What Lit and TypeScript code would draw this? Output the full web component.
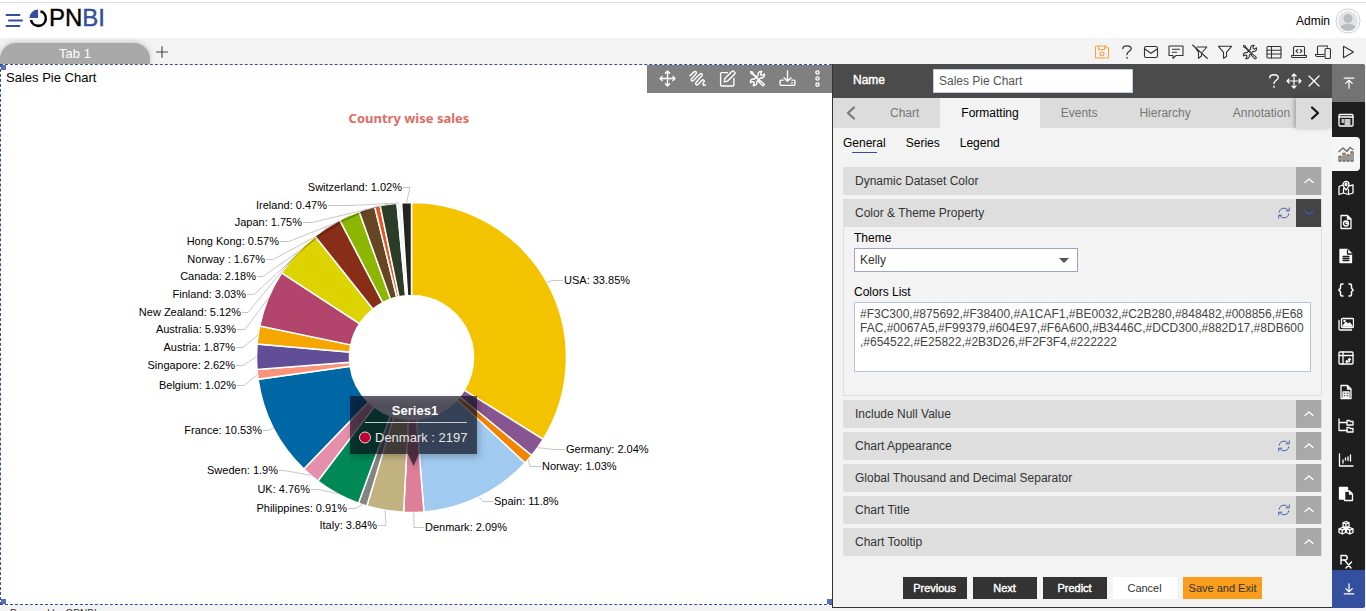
import { LitElement, html, svg, css } from "lit";
import { customElement, state } from "lit/decorators.js";
import { classMap } from "lit/directives/class-map.js";

const icon = (body: unknown, size = 16, weight = 1.1) => html`<svg
  width=${size} height=${size} viewBox="0 0 16 16" fill="none" stroke="currentColor"
  stroke-width=${weight} stroke-linecap="round" stroke-linejoin="round" aria-hidden="true">${body}</svg>`;

const ICONS: Record<string, unknown> = {
  save: svg`<path d="M1.500 3a1 1 0 0 1 1-1h9l3 2.500v8.500a1 1 0 0 1-1 1h-11a1 1 0 0 1-1-1zM4.500 2v3.500h6V2"/><circle cx="8" cy="9.800" r="2"/>`,
  help: svg`<path d="M3.800 4.700C3.800 2.600 5.500 1.800 8 1.800s4.200 1 4.200 3C12.200 7.400 8 7.200 8 10.500M8 13.300v.9"/>`,
  mail: svg`<rect x="1.500" y="2.500" width="13" height="11" rx="1.500"/><path d="M1.800 5 8 9.300 14.200 5"/>`,
  comment: svg`<path d="M1 2h14v9.500H8l-3 2.800v-2.800H1zM4.500 5.300h7M4.500 8.300h4"/>`,
  nofilter: svg`<path d="M5 3h9.800L10.500 8M2.800 3 6.500 8.300v6L9.500 12v-2M.6 1 15.400 14.500"/>`,
  filter: svg`<path d="M1.500 2.300h13L9.500 8.300v4.200l-3 1.800V8.300z"/>`,
  tools: svg`<path d="M1.500 1.500 3.300 2l1 2 4 4M10 9.600l3.900 3.300c1 1.100-.3 2.500-1.500 1.500L9 10.800z"/><path d="M1.500 1.500 2 3.300l2 1 4 4M14.500 3.800 12.600 5l-1.400-.3L10.900 3.300 12.100 1.400C9.900.9 8 2.600 8.600 5L5 8.600c-2.300-.7-4.200 1.300-3.500 3.400l1.900-1 1.300.4.300 1.400-1.200 1.800c2.200.6 4.200-1.200 3.500-3.500L11 7.400c2.300.6 4.100-1.400 3.500-3.600z"/>`,
  table: svg`<rect x="1" y="2.500" width="14" height="11.500" rx="1"/><path d="M1 6.200h14M1 10h14M5.500 2.500V14"/>`,
  laptop: svg`<path d="M2.500 11V3.500a1 1 0 0 1 1-1h9a1 1 0 0 1 1 1V11M.5 11.500h15v1a1 1 0 0 1-1 1h-13a1 1 0 0 1-1-1zM6.700 5.500 5 7.100l1.700 1.600M9.300 5.500 11 7.100 9.300 8.700"/>`,
  devices: svg`<path d="M2.500 10V3a1 1 0 0 1 1-1h9v1M9 10.500H.5v.5c0 1 .7 1.500 1.500 1.500h7"/><rect x="10" y="4.500" width="5.500" height="10" rx="1.300"/>`,
  play: svg`<path d="M3.500 2.300 13.500 8l-10 5.700z"/>`,
  move: svg`<path d="M8 1v14M1 8h14M6 3l2-2 2 2M6 13l2 2 2-2M3 6 1 8l2 2M13 6l2 2-2 2"/>`,
  scribble: svg`<path d="M.8 5.500 4.500 2c1.700-1.500 3.300.2 2 1.700L2.600 8c-1.400 1.700.2 3.200 1.800 1.700L10 4c1.600-1.500 3.300 0 1.900 1.700l-5.100 5.800c-1.400 1.800.3 3.400 1.900 1.900L12 9.800c1.500-1.400 3-.2 2 1.400l-.6 1.300c-.6 1.600.6 2.400 2 1.500"/>`,
  edit: svg`<path d="M8 2.500H2.500a1 1 0 0 0-1 1V14a1 1 0 0 0 1 1H13a1 1 0 0 0 1-1V8M5.500 8 12.300 1.200a1 1 0 0 1 1.500 0l1 1a1 1 0 0 1 0 1.500L8 10.500l-3 .7z"/>`,
  download: svg`<path d="M8 1v9.500M4.700 7.300 8 10.600l3.300-3.300M4 9.500H2a1 1 0 0 0-1 1v3a1 1 0 0 0 1 1h12a1 1 0 0 0 1-1v-3a1 1 0 0 0-1-1h-2M12 12.200h.5"/>`,
  dots: svg`<circle cx="8" cy="2.300" r="1.500"/><circle cx="8" cy="8" r="1.500"/><circle cx="8" cy="13.700" r="1.500"/>`,
  close: svg`<path d="m3 3 10 10M13 3 3 13"/>`,
  refresh: svg`<path d="M2.500 7C3 4.200 5.300 2.500 8 2.500c2 0 3.600.9 4.700 2.500M13.500 9c-.5 2.800-2.800 4.500-5.500 4.500-2 0-3.600-.9-4.700-2.500M14 2.200V5.500h-3.400M2 13.800V10.500h3.400"/>`,
  top: svg`<path d="M2.500 2.500h11M8 14V5M4.300 8.500 8 4.800l3.700 3.700"/>`,
  bottom: svg`<path d="M2.500 13.500h11M8 2v9M4.300 7.500 8 11.200l3.700-3.700"/>`,
};

const SIDE: [string, unknown][] = [
  ["Properties", svg`<rect x="1" y="2.500" width="14" height="11.500" rx="1"/><path d="M1 5h14M4 8h1.500M7 8h5M4 10h1.500M7 10h5M7 12h5"/>`],
  ["Charts", svg`<path d="M1 5.500 5 2l4 3.500 3-4 3 2"/><path d="M1 10.500h2V15H1zM5 7.500h2V15H5zM9 9h2v6H9zM13 6h2v9h-2z"/><path d="M5 9.500h2M13 8h2" stroke="#e08a3c"/>`],
  ["Maps", svg`<path d="M4.700 5 1 6.500v8l4.500-1.500 5 1.500L15 13V5l-3.500.8M5.500 8.500V13M10.500 9.500v5M8 10C6 7.500 5 6.300 5 4.500a3 3 0 0 1 6 0C11 6.300 10 7.500 8 10z"/><circle cx="8" cy="4.500" r="1"/>`],
  ["Reports", svg`<path d="M3 1.500h6.500L13 5v9.500H3zM9.500 1.500V5H13"/><circle cx="8" cy="9.500" r="2.500"/><path d="M8 7v2.500h2.500"/>`],
  ["Text", svg`<path d="M2 1.500h7.500l4 4v9H2z" fill="currentColor"/><path d="M9.500 2v4h4M5 8.500h6M5 10.500h6M5 12.500h6" stroke="#1e1e1e"/>`],
  ["Code", svg`<path stroke-width="1.500" d="M5 2H4C3 2 2.500 2.700 2.500 3.500v2.700L.8 8l1.700 1.800v2.700c0 .8.500 1.500 1.500 1.500h1M11 2h1c1 0 1.500.7 1.500 1.500v2.700L15.200 8l-1.700 1.800v2.700c0 .8-.5 1.500-1.500 1.500h-1"/>`],
  ["Images", svg`<rect x="3.500" y="2.500" width="12" height="9" rx="1"/><path d="M1 4.500V13a1 1 0 0 0 1 1h11.500"/><path d="m5 10 3-3.500 2 2 1.500-1.500L14 10z" fill="currentColor"/><circle cx="6.500" cy="5" r=".6"/>`],
  ["Pivot", svg`<rect x="1" y="2" width="14" height="12" rx="1"/><path d="M1 5.500h14M5 2v12M8 11.500h3.500V8.500M9 10.500l-1 1 1 1M10.500 9.500l1-1 1 1"/>`],
  ["Data file", svg`<path d="M3 1.500h6.500L13 5v9.500H3zM9.500 1.500V5H13M5 8h6v5H5zM5 10.500h6M8 8v5"/>`],
  ["Tree", svg`<path d="M1 1v11.500h8M1 4.500h8"/><path d="M9 2.500h2.500l.7 1H15v3.500H9zM9 9.500h2.500l.7 1H15V14H9z"/>`],
  ["Scatter", svg`<path d="M1.500 2v12H15M5 8v3M7.500 6v2M10 5v3.500M12.500 3v6"/>`],
  ["Copy", svg`<path d="M1.500 1.500h8v3.500H6.500v8h-5z" fill="currentColor"/><path d="M6.500 5h5l3 3v6.500h-8zM11.500 5v3h3"/>`],
  ["Objects", svg`<path d="m8 1.500 3 1.300v3.500L8 7.700 5 6.300V2.800zM5 2.800 8 4l3-1.200M8 4v3.700M4.300 7.500l3.200 1.300v3.700L4.300 14 1 12.500V8.800zM1 8.800l3.300 1.300 3.200-1.300M4.300 10v4M11.700 7.500 15 8.800v3.700L11.700 14l-3.200-1.500V8.800zM8.500 8.800l3.200 1.300L15 8.800M11.700 10v4"/>`],
  ["Prescriptions", svg`<path stroke-width="1.400" d="M3 10V1.500h4c3 0 3 4.500 0 4.500H3M6.500 6 13 14M13.500 8 8 14"/>`],
];

interface Slice { name: string; pct: number; color: string; x: number; y: number; elbow: number; right?: boolean; }

const SLICES: Slice[] = [
  { name: "USA", pct: 33.85, color: "#F3C300", x: 564, y: 280, elbow: 552, right: true },
  { name: "Germany", pct: 2.04, color: "#875692", x: 566, y: 449, elbow: 555, right: true },
  { name: "Norway", pct: 1.03, color: "#F38400", x: 542, y: 466, elbow: 530, right: true },
  { name: "Spain", pct: 11.8, color: "#A1CAF1", x: 494, y: 501, elbow: 483, right: true },
  { name: "Denmark", pct: 2.09, color: "#DE7F98", x: 425, y: 527, elbow: 414, right: true },
  { name: "Italy", pct: 3.84, color: "#C2B280", x: 377, y: 525, elbow: 386 },
  { name: "Philippines", pct: 0.91, color: "#848482", x: 347, y: 508, elbow: 355 },
  { name: "UK", pct: 4.76, color: "#008856", x: 310, y: 489, elbow: 319 },
  { name: "Sweden", pct: 1.9, color: "#E68FAC", x: 278, y: 470, elbow: 284 },
  { name: "France", pct: 10.53, color: "#0067A5", x: 262, y: 430, elbow: 268 },
  { name: "Belgium", pct: 1.02, color: "#F99379", x: 236, y: 385, elbow: 244 },
  { name: "Singapore", pct: 2.62, color: "#604E97", x: 235, y: 365, elbow: 243 },
  { name: "Austria", pct: 1.87, color: "#F6A600", x: 235, y: 347, elbow: 243 },
  { name: "Australia", pct: 5.93, color: "#B3446C", x: 236, y: 329, elbow: 245 },
  { name: "New Zealand", pct: 5.12, color: "#DCD300", x: 241, y: 312, elbow: 248 },
  { name: "Finland", pct: 3.03, color: "#882D17", x: 246, y: 294, elbow: 254 },
  { name: "Canada", pct: 2.18, color: "#8DB600", x: 256, y: 276, elbow: 263 },
  { name: "Norway ", pct: 1.67, color: "#654522", x: 265, y: 259, elbow: 273 },
  { name: "Hong Kong", pct: 0.57, color: "#E25822", x: 279, y: 241, elbow: 289 },
  { name: "Japan", pct: 1.75, color: "#2B3D26", x: 302, y: 222, elbow: 312 },
  { name: "Ireland", pct: 0.47, color: "#F2F3F4", x: 327, y: 205, elbow: 350 },
  { name: "Switzerland", pct: 1.02, color: "#222222", x: 402, y: 187, elbow: 410 },
];

const CX = 411.5, CY = 357.5, R_OUT = 155, R_IN = 62;
const at = (turn: number, r: number) => {
  const a = turn * 2 * Math.PI;
  return [CX + r * Math.sin(a), CY - r * Math.cos(a)].map((v) => v.toFixed(2)).join(" ");
};

@customElement("pie-chart")
export class PieChart extends LitElement {
  static styles = css`
    :host { display: flex; flex: 1; min-height: 0; }
    .plot { flex: 1; min-width: 0; font: 11px "Liberation Sans", Arial, sans-serif; }
    .title { font: bold 13px "Noto Sans", "Open Sans", sans-serif; fill: #dd6b66; text-anchor: middle; }
    .label { fill: #000; }
    .left { text-anchor: end; }
    .slice { stroke: #fff; stroke-width: 1.5; }
    .leader { fill: none; stroke: #000; stroke-opacity: 0.22; }
    .tip { fill: rgba(12, 12, 28, 0.64); filter: drop-shadow(2px 3px 3px rgba(0, 0, 0, 0.35)); }
    .tip-text { font-size: 13px; fill: #e6e6e6; }
    .tip-title { font-size: 13px; font-weight: bold; fill: #fff; text-anchor: middle; }
    .tip-rule { stroke: #c8c8cc; }
    .tip-dot { fill: #be0032; stroke: #ddd; }
  `;

  render() {
    let turn = 0;
    const parts = SLICES.map((s) => {
      const a = turn, b = (turn += s.pct / 100);
      return { s, a, b, mid: (a + b) / 2 };
    });
    return html`<svg class="plot" viewBox="1 93 831 511" role="img" aria-label="Country wise sales">
      <text class="title" x="409" y="123">Country wise sales</text>
      ${parts.map(({ s, a, b }) => {
        const big = b - a > 0.5 ? 1 : 0;
        return svg`<path class="slice" fill=${s.color}
          d="M${at(a, R_OUT)}A${R_OUT} ${R_OUT} 0 ${big} 1 ${at(b, R_OUT)}L${at(b, R_IN)}A${R_IN} ${R_IN} 0 ${big} 0 ${at(a, R_IN)}z"/>`;
      })}
      ${parts.map(({ s, mid }) => svg`
        <path class="leader" d="M${s.right ? s.x - 1 : s.x + 1} ${s.y + 0.5}H${s.elbow}L${at(mid, R_OUT)}"/>
        <text class=${s.right ? "label" : "label left"} x=${s.x} y=${s.y + 4}>${s.name}: ${s.pct}%</text>`)}
      <path class="tip" d="M350 396H477V454H419L413.5 466L408 454H350z"/>
      <text class="tip-title" x="415" y="415">Series1</text>
      <path class="tip-rule" d="M365 422.500H467"/>
      <circle class="tip-dot" cx="365" cy="437.500" r="5.500"/>
      <text class="tip-text" x="375" y="442">Denmark : 2197</text>
    </svg>`;
  }
}

@customElement("property-panel")
export class PropertyPanel extends LitElement {
  @state() private open = "Color & Theme Property";

  static styles = css`
    :host { display: flex; flex-direction: column; width: 500px; margin-bottom: 3px; box-sizing: border-box;
      border-left: 1px solid #333; border-bottom: 1px solid #333; background: #f3f3f3;
      font: 12px "Liberation Sans", Arial, sans-serif; color: #000; }
    button { font: inherit; color: inherit; border: 0; padding: 0; background: none; display: grid; place-items: center; }
    .head { display: flex; align-items: center; height: 34px; background: #4b4b4b; color: #fff; padding: 0 10px 0 20px; }
    .name { flex: none; width: 80px; padding-bottom: 2px; -webkit-text-stroke: 0.4px #fff; }
    .name-box { width: 200px; height: 24px; box-sizing: border-box; border: 1px solid #c5cbe0; padding: 0 5px;
      font: inherit; color: #555; background: #fff; margin: 0; }
    .tools { display: flex; gap: 4px; margin-left: auto; }
    .tabs { display: flex; height: 30px; background: #dcdcdc; color: #777; }
    .arrow { flex: none; width: 36px; }
    .arrow.next { color: #111; box-shadow: -2px 0 4px rgba(0, 0, 0, 0.25); background: #dcdcdc; position: relative; }
    .strip { display: flex; flex: 1; min-width: 0; overflow: hidden; }
    .tab { padding: 0 21px; flex: none; }
    .tab.on { background: #f3f3f3; color: #000; }
    .subs { display: flex; gap: 20px; padding: 8px 10px 0; height: 31px; box-sizing: border-box; align-items: start; }
    .sub { line-height: 14px; gap: 2px; }
    .sub.on::after { content: ""; width: 25px; height: 1px; background: #354f9f; }
    .list { display: flex; flex-direction: column; gap: 4px; padding: 8px 10px 0; flex: 1; }
    .item { border-right: 1px solid #ddd; }
    .bar { display: flex; align-items: center; height: 28px; background: #dedede; color: #333; padding-left: 12px; }
    .bar-name { flex: 1; }
    .sync { color: #3f57a6; width: 25px; }
    .toggle { width: 25px; height: 28px; background: #a9a9a9; color: #fff; }
    .toggle.open { background: #444; color: #3f5cc0; }
    .body { border: 1px solid #ddd; border-width: 0 0 1px 1px; padding: 4px 10px 23px; display: flex; flex-direction: column; align-items: stretch; }
    .caption { line-height: 14px; margin-bottom: 3px; }
    .pick { display: grid; align-items: center; width: 224px; margin-bottom: 13px; }
    .pick > * { grid-area: 1 / 1; }
    .pick svg { justify-self: end; margin-right: 9px; pointer-events: none; }
    .theme { appearance: none; height: 24px; border: 1px solid #9aa5c8; background: #fff; font: inherit; color: #333; padding: 0 5px; border-radius: 0; margin: 0; }
    .colors { height: 70px; box-sizing: border-box; border: 1px solid #bcc4dc; background: #fff; padding: 4px 5px; font: inherit;
      line-height: 14px; color: #444; resize: none; line-break: anywhere; margin: 0; overflow: hidden; }
    .foot { display: flex; justify-content: center; gap: 6px; padding-bottom: 8px; }
    .act { height: 22px; min-width: 64px; font-size: 11px; background: #333; color: #fff; -webkit-text-stroke: 0.4px #fff; }
    .act.plain { background: #fff; color: #333; -webkit-text-stroke: 0; }
    .act.main { background: #f99d1c; color: #333; -webkit-text-stroke: 0; padding: 0 6px; min-width: 79px; box-sizing: border-box; }
  `;

  private section(name: string, sync = false, body: unknown = "") {
    const open = this.open === name;
    return html`<div class="item">
      <div class="bar"><span class="bar-name">${name}</span>
        ${sync ? html`<button class="sync" aria-label="Reset ${name}">${icon(ICONS.refresh, 14)}</button>` : ""}
        <button class=${classMap({ toggle: true, open })} aria-label="Toggle ${name}" aria-expanded=${open}
          @click=${() => (this.open = open ? "" : name)}>
          ${icon(open ? svg`<path d="m4 6 4 3.500L12 6"/>` : svg`<path stroke-width="1.300" d="m4 9.500 4-3.500 4 3.500"/>`)}</button>
      </div>${open ? body : ""}</div>`;
  }

  render() {
    return html`
      <div class="head">
        <label class="name" for="name">Name</label>
        <input class="name-box" id="name" value="Sales Pie Chart">
        <div class="tools">
          <button aria-label="Help">${icon(ICONS.help, 16, 1.4)}</button>
          <button aria-label="Move">${icon(ICONS.move, 16, 1.2)}</button>
          <button aria-label="Close">${icon(ICONS.close, 16, 1.3)}</button>
        </div>
      </div>
      <div class="tabs">
        <button class="arrow" aria-label="Previous tabs">${icon(svg`<path stroke-width="2.200" d="M11 2.500 5 8l6 5.500"/>`)}</button>
        <div class="strip">${["Chart", "Formatting", "Events", "Hierarchy", "Annotation"].map((t) =>
          html`<button class=${classMap({ tab: true, on: t === "Formatting" })}>${t}</button>`)}</div>
        <button class="arrow next" aria-label="Next tabs">${icon(svg`<path stroke-width="2.200" d="m6 2.500 6 5.500-6 5.500"/>`)}</button>
      </div>
      <div class="subs">${["General", "Series", "Legend"].map((t) =>
        html`<button class=${classMap({ sub: true, on: t === "General" })}>${t}</button>`)}</div>
      <div class="list">
        ${this.section("Dynamic Dataset Color")}
        ${this.section("Color & Theme Property", true, html`<div class="body">
          <label class="caption" for="theme">Theme</label>
          <div class="pick"><select class="theme" id="theme"><option>Kelly</option></select>
            <svg width="10" height="5" viewBox="0 0 10 5" aria-hidden="true"><path d="M0 0h10L5 5z" fill="#555"/></svg></div>
          <label class="caption" for="colors">Colors List</label>
          <textarea class="colors" id="colors" spellcheck="false" .value=${"#F3C300,#875692,#F38400,#A1CAF1,#BE0032,#C2B280,#848482,#008856,#E68FAC,#0067A5,#F99379,#604E97,#F6A600,#B3446C,#DCD300,#882D17,#8DB600,#654522,#E25822,#2B3D26,#F2F3F4,#222222"}></textarea>
        </div>`)}
        ${this.section("Include Null Value")}
        ${this.section("Chart Appearance", true)}
        ${this.section("Global Thousand and Decimal Separator")}
        ${this.section("Chart Title", true)}
        ${this.section("Chart Tooltip")}
      </div>
      <div class="foot">
        <button class="act">Previous</button><button class="act">Next</button><button class="act">Predict</button>
        <button class="act plain">Cancel</button><button class="act main">Save and Exit</button>
      </div>`;
  }
}

@customElement("app-root")
export class AppRoot extends LitElement {
  static styles = css`
    :host { display: flex; flex-direction: column; height: 100vh; overflow: hidden; background: #f3f3f3;
      font: 12px "Liberation Sans", Arial, sans-serif; color: #000; }
    button { font: inherit; color: inherit; border: 0; padding: 0; background: none; display: grid; place-items: center; }
    .top { display: flex; align-items: center; height: 36px; margin-top: 2px; box-sizing: border-box; border-top: 1px solid #ddd;
      background: #fff; padding: 0 5px; box-shadow: 0 -2px #fff; flex: none; }
    .brand { display: flex; align-items: center; gap: 1px; margin-left: 6px; padding-bottom: 5px; font-size: 24px; line-height: 26px; -webkit-text-stroke: 0.4px; }
    .bi { color: #354f9f; }
    .user { margin-left: auto; display: flex; align-items: center; gap: 5px; }
    .tabbar { display: flex; height: 26px; align-items: end; padding-right: 10px; flex: none; }
    .page { width: 150px; height: 21px; border-radius: 16px 16px 0 0; background: #a9a9a9; color: #fff; font-size: 13px;
      box-shadow: 0 -1px 5px rgba(0, 0, 0, 0.2); }
    .add { width: 24px; height: 24px; color: #444; }
    .actions { display: flex; justify-content: space-between; width: 262px; margin-left: auto; height: 25px; color: #333; }
    .save { color: #f9a04a; }
    .main { display: flex; flex: 1; min-height: 0; }
    .stage { display: flex; flex-direction: column; flex: 1; min-width: 0; }
    .canvas { position: relative; flex: 1; min-height: 0; display: flex; flex-direction: column; background: #fff;
      border: 1px dashed #354fa8; border-right: 0; }
    .grip { position: absolute; width: 5px; height: 5px; background: #5b6fb5; }
    .tl { left: 0; top: 0; } .bl { left: 0; bottom: 0; } .br { right: 0; bottom: 0; }
    .row { display: flex; justify-content: space-between; height: 28px; flex: none; }
    .widget { font-size: 13px; padding: 5px 0 0 5px; line-height: 16px; }
    .toolbar { display: flex; background: #808080; color: #fff; padding-left: 5px; }
    .toolbar button { width: 30px; height: 27px; }
    .powered { height: 6px; font-size: 10px; padding-left: 10px; color: #333; }
    .powered p { margin: 0; padding-top: 2px; line-height: 14px; }
    .rail { display: flex; flex-direction: column; width: 33px; margin: 0 1px 3px 0; background: #1e1e1e; color: #fff; border-radius: 0 3px 3px 0; overflow: hidden; }
    .rail-list { flex: 1; min-height: 0; overflow: hidden; padding-top: 1px; }
    .rail-item { width: 28px; height: 34px; }
    .rail-item.on { background: #f5f5f5; color: #666; border-radius: 0 4px 4px 0; }
    .rail-end { height: 38px; flex: none; width: 100%; }
    .up { background: #737373; }
    .down { background: #354f9f; }
  `;

  private tool(label: string, key: string, size = 16, weight = 1.1) {
    return html`<button class=${key} aria-label=${label} title=${label}>${icon(ICONS[key], size, weight)}</button>`;
  }

  render() {
    return html`
      <header class="top">
        <button aria-label="Menu"><svg width="18" height="16" viewBox="0 0 18 16" fill="none" stroke="#354f9f" stroke-width="2" stroke-linecap="round" aria-hidden="true"><path d="M1.500 2h13M4 7.500h13M1.500 13h13"/></svg></button>
        <div class="brand" role="img" aria-label="OPNBI">
          <svg width="19" height="19" viewBox="0 0 19 19" aria-hidden="true">
            <path d="M11.500 2.200A7.500 7.500 0 1 1 2 11" fill="none" stroke="#000" stroke-width="2.600"/>
            <path d="M9 .5V9H.5A8.500 8.500 0 0 1 9 .5z" fill="#354f9f"/></svg>
          <span>PN<span class="bi">BI</span></span>
        </div>
        <div class="user"><span>Admin</span>
          <svg width="26" height="26" viewBox="0 0 26 26" aria-hidden="true"><circle cx="13" cy="13" r="12" fill="#fff" stroke="#ccc"/>
            <circle cx="13" cy="13" r="10" fill="#e4e4e6"/><circle cx="13" cy="10.500" r="4.500" fill="#bbbcc0"/><path d="M5.500 19.500c1-5 14-5 15 0a10 10 0 0 1-15 0z" fill="#bbbcc0"/></svg>
        </div>
      </header>
      <nav class="tabbar">
        <button class="page">Tab 1</button>
        <button class="add" aria-label="Add tab">${icon(svg`<path d="M8 2.500v11M2.500 8h11"/>`)}</button>
        <div class="actions">
          ${this.tool("Save", "save")}${this.tool("Help", "help", 16, 1.3)}${this.tool("Mail", "mail")}${this.tool("Comment", "comment")}
          ${this.tool("Clear filter", "nofilter")}${this.tool("Filter", "filter")}${this.tool("Tools", "tools")}${this.tool("Data", "table")}
          ${this.tool("Script", "laptop")}${this.tool("Devices", "devices")}${this.tool("Run", "play")}
        </div>
      </nav>
      <main class="main">
        <section class="stage">
          <div class="canvas">
            <div class="row"><span class="widget">Sales Pie Chart</span>
              <div class="toolbar">
                ${this.tool("Move", "move", 17, 1.3)}${this.tool("Style", "scribble", 17, 1.3)}${this.tool("Edit", "edit", 17, 1.3)}
                ${this.tool("Tools", "tools", 17, 1.3)}${this.tool("Download", "download", 17, 1.3)}${this.tool("More", "dots", 17, 1.3)}
              </div></div>
            <pie-chart></pie-chart>
            <i class="grip tl"></i><i class="grip bl"></i><i class="grip br"></i>
          </div>
          <footer class="powered"><p>Powered by OPNBI</p></footer>
        </section>
        <property-panel></property-panel>
        <aside class="rail">
          <button class="rail-end up" aria-label="Scroll up">${icon(ICONS.top, 14, 1.4)}</button>
          <div class="rail-list">${SIDE.map(([label, art], i) =>
            html`<button class=${classMap({ "rail-item": true, on: i === 1 })} aria-label=${label}>${icon(art, 16, 1.3)}</button>`)}</div>
          <button class="rail-end down" aria-label="Scroll down">${icon(ICONS.bottom, 14, 1.4)}</button>
        </aside>
      </main>`;
  }
}
